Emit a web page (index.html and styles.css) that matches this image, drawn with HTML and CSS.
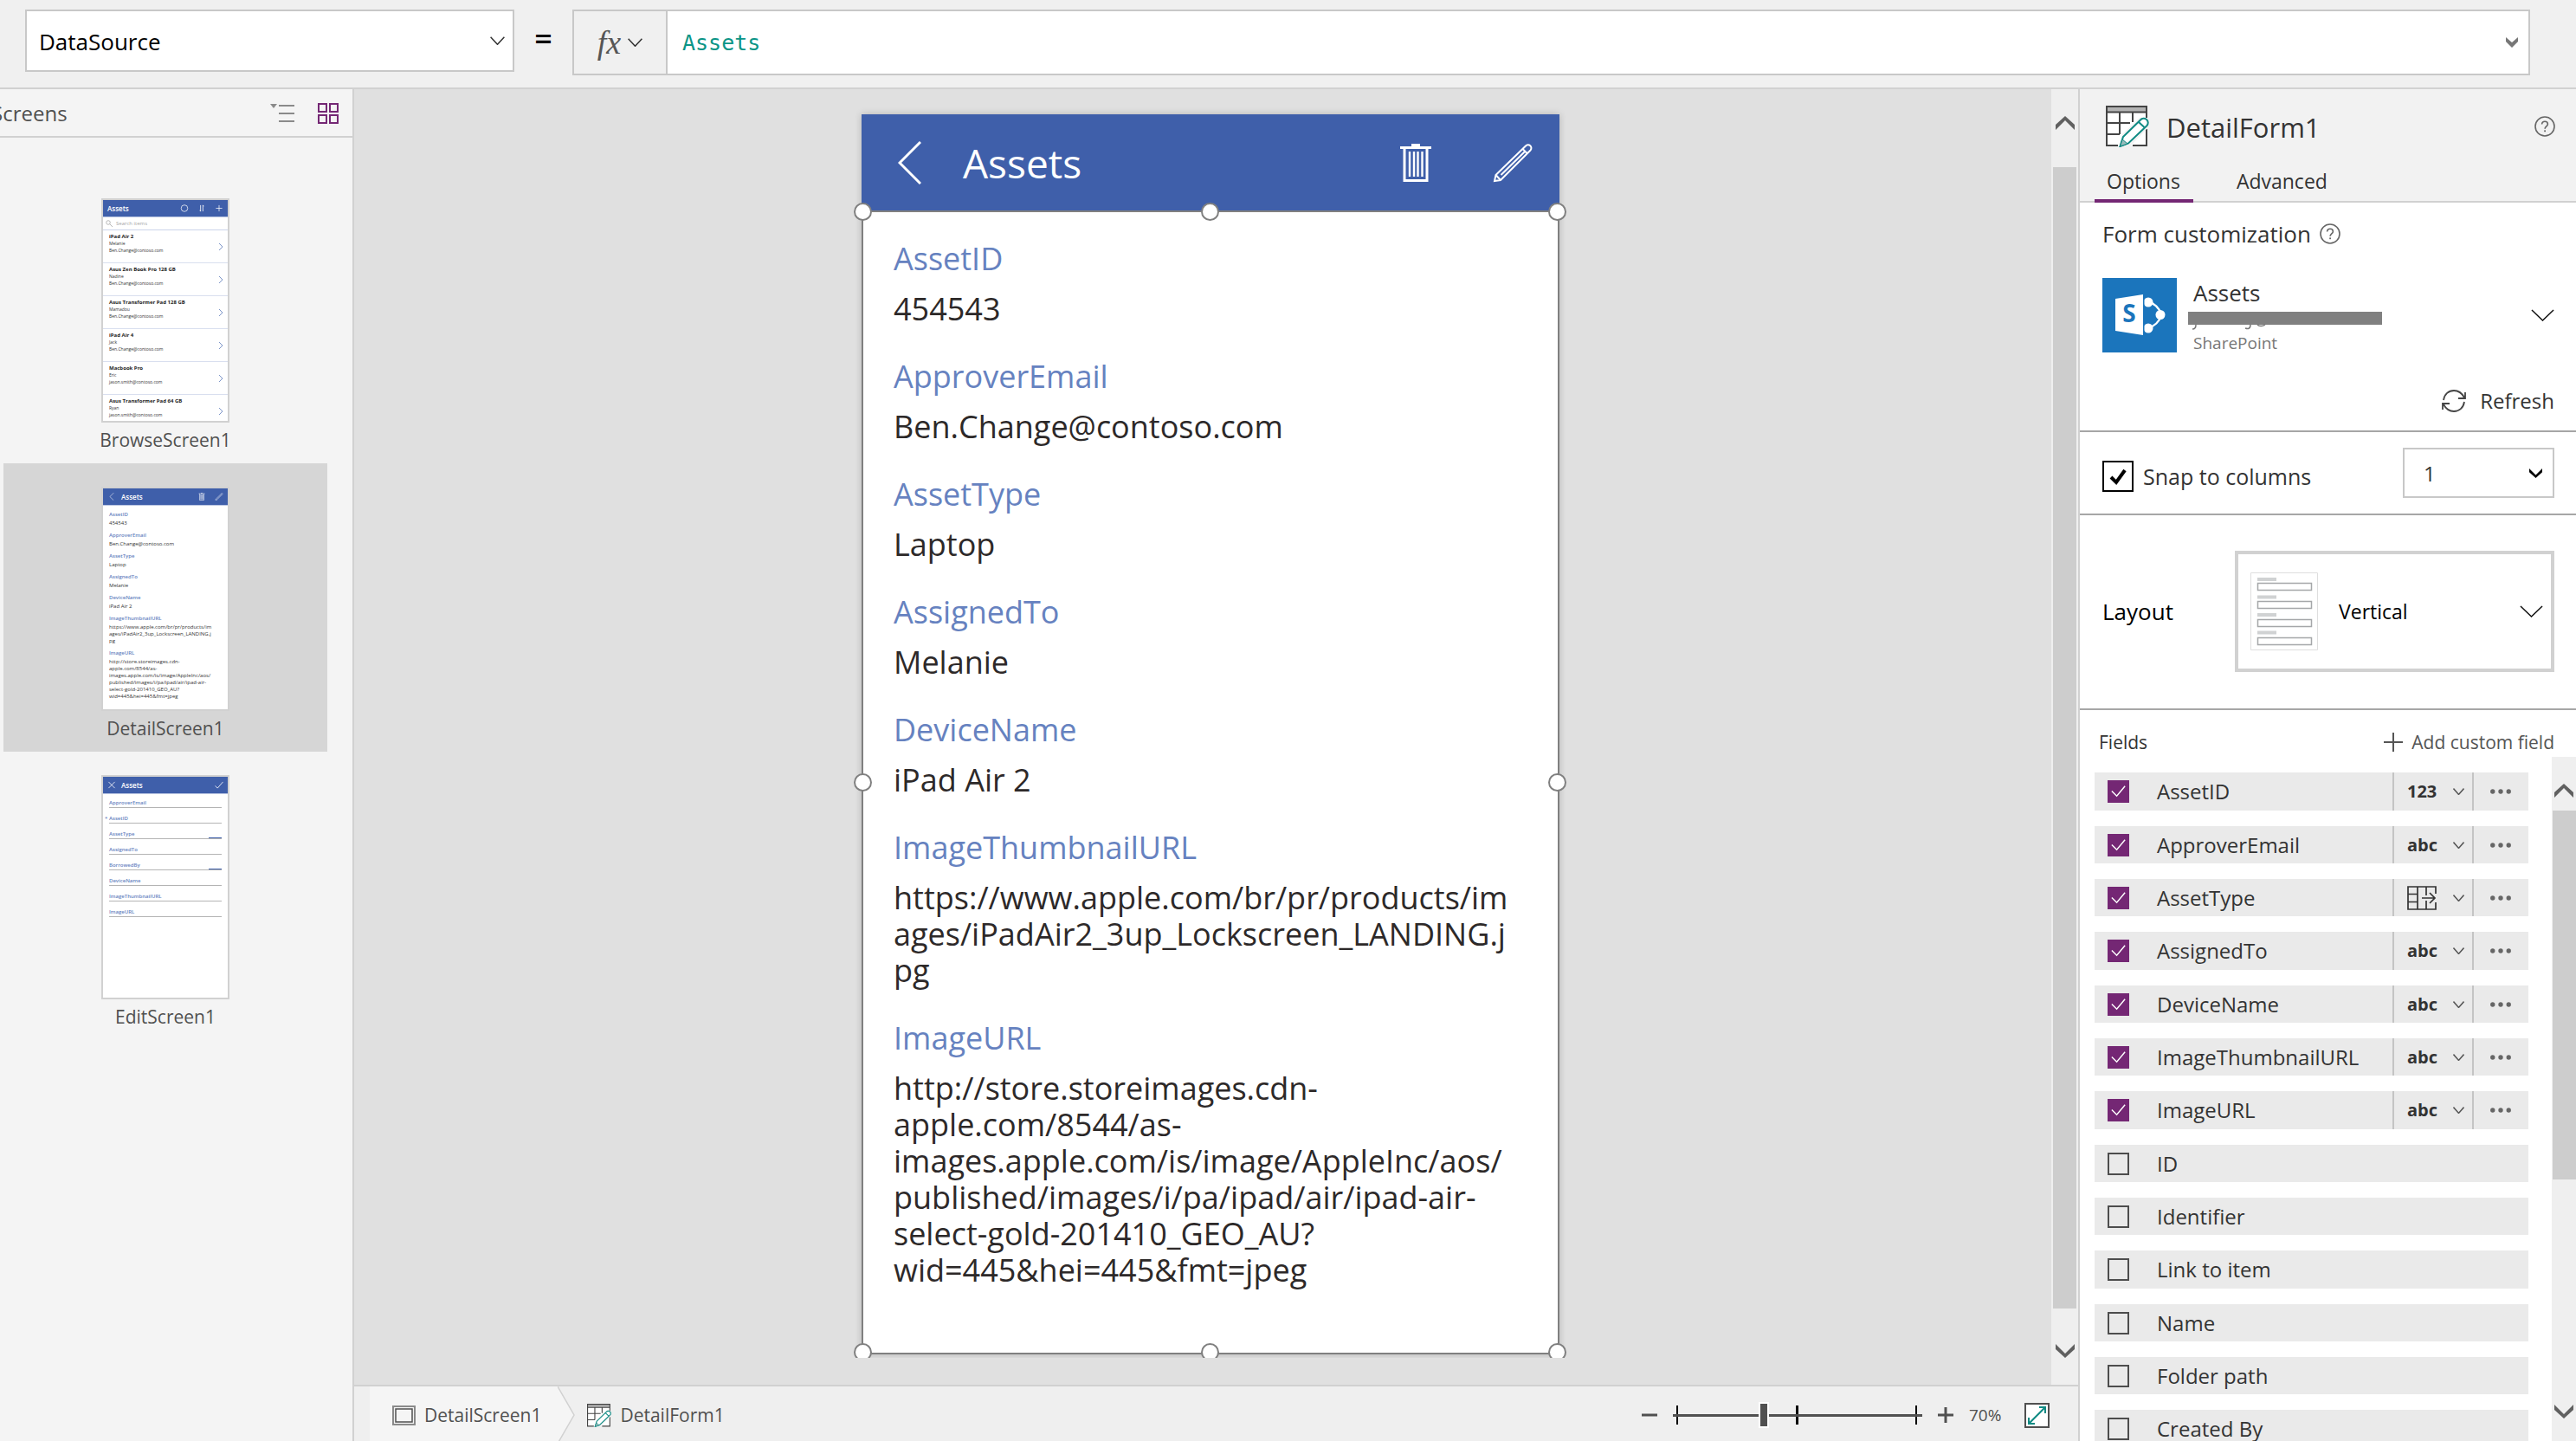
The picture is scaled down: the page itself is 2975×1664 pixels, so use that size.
FILE: index.html
```html
<!DOCTYPE html>
<html lang="en">
<head>
<meta charset="utf-8">
<title>DetailForm1 - Assets</title>
<meta name="viewport" content="width=device-width, initial-scale=1">
<link rel="stylesheet" href="styles.css">
</head>
<body>
<svg class="sprite" aria-hidden="true">
  <symbol id="thin-down" viewBox="0 0 28 14" preserveAspectRatio="none"><path d="M1 1l13 12L27 1" fill="none" stroke="currentColor" stroke-width="1.500" vector-effect="non-scaling-stroke"/></symbol>
  <symbol id="bold-down" viewBox="0 0 22 16"><path d="M0 0l11 11L22 0v6L11 16 0 6z" fill="currentColor"/></symbol>
  <symbol id="bold-up" viewBox="0 0 22 16"><path d="M0 16L11 5l11 11v-6L11 0 0 10z" fill="currentColor"/></symbol>
  <symbol id="help" viewBox="0 0 24 24"><circle cx="12" cy="12" r="11" fill="none" stroke="currentColor" stroke-width="1.6"/><path d="M8.6 9.6c0-2.2 1.4-3.4 3.4-3.4s3.4 1.2 3.4 3c0 2.6-3.3 2.9-3.3 5.6" fill="none" stroke="currentColor" stroke-width="1.6"/><rect x="11.2" y="16.4" width="1.8" height="1.8" fill="currentColor"/></symbol>
  <symbol id="form" viewBox="0 0 50 48">
    <path d="M1 1h46v45H1z" fill="#fff"/>
    <path d="M1 1h46v6H1z" fill="#b3b3b3"/>
    <path d="M31 46h16V27M47 14V1H1v45h13M1 7.500h46M1 20h27M1 33h15M16 8v25M31 8v11" fill="none" stroke="#444" stroke-width="2"/>
    <path d="M15 48l4-15 20-19 9 1 2 9-21 22z" fill="#f2f2f2"/>
    <path d="M16.500 47l3.500-11 20-19.500a4.500 4.500 0 0 1 7.500 6.500L26 43.500z" fill="#fff" stroke="#0f8a83" stroke-width="2"/>
    <path d="M16.500 47l2.600-8 6 5z" fill="#9bb" stroke="#0f8a83" stroke-width="1"/>
    <path d="M38 19l6.500 6" stroke="#0f8a83" stroke-width="2"/>
  </symbol>
  <symbol id="dots" viewBox="0 0 26 6"><circle cx="3" cy="3" r="2.900" fill="currentColor"/><circle cx="13" cy="3" r="2.900" fill="currentColor"/><circle cx="23" cy="3" r="2.900" fill="currentColor"/></symbol>
  <symbol id="trash" viewBox="0 0 36 46"><path d="M0 4h36v3H0zM13 1h10v3H13z" fill="currentColor"/><path d="M5 6v37.500h26V6" fill="none" stroke="currentColor" stroke-width="3"/><path d="M11 10v29M16 10v29M20.500 10v29M25.500 10v29" fill="none" stroke="currentColor" stroke-width="2.400"/></symbol>
  <symbol id="pencil" viewBox="0 0 46 46"><path d="M2 44l1.500-7L38 3.500a3.500 3.500 0 0 1 5.500 5L9 43zM34.500 7l5.500 5.500M3.500 37l5.500 6M9.500 37L36.500 10.500" fill="none" stroke="currentColor" stroke-width="2"/></symbol>
  <symbol id="back" viewBox="0 0 27 50"><path d="M26 1L2 25l24 24" fill="none" stroke="currentColor" stroke-width="3"/></symbol>
  <symbol id="cell-go" viewBox="0 0 6 10"><path d="M1 1l4 4-4 4" fill="none" stroke="#7f97c9" stroke-width="1"/></symbol>
</svg>

<div class="app">
  <header class="formula-bar">
    <div class="pick property">
      <select aria-label="Property"><option>DataSource</option></select>
      <svg class="chev"><use href="#thin-down"/></svg>
    </div>
    <span class="equals">=</span>
    <div class="formula">
      <button class="fx" type="button" aria-label="Functions"><i>fx</i><svg class="chev"><use href="#thin-down"/></svg></button>
      <input type="text" value="Assets" aria-label="Formula">
      <button class="expand" type="button" aria-label="Expand formula bar"><svg viewBox="0 0 14 12"><path d="M0 0l7 6 7-6v5l-7 7-7-7z" fill="currentColor"/></svg></button>
    </div>
  </header>

  <div class="workspace">
    <aside class="screens">
      <div class="screens-head">
        <h2>Screens</h2>
        <button type="button" aria-label="Tree view"><svg class="tree" viewBox="0 0 28 22"><path d="M0 0h8L4 5z" fill="#8a8a8a"/><path d="M10 2h18M10 11h18M10 20h18" stroke="#8a8a8a" stroke-width="2"/></svg></button>
        <button type="button" aria-label="Thumbnail view"><svg class="tiles" viewBox="0 0 24 24"><path d="M1 1h9v9H1zM14 1h9v9h-9zM1 14h9v9H1zM14 14h9v9h-9z" fill="none" stroke="#742774" stroke-width="2"/></svg></button>
      </div>
      <ul class="screen-list">
        <li>
          <div class="thumb">
            <div class="t-bar"><b>Assets</b>
              <svg viewBox="0 0 10 10"><circle cx="5" cy="5" r="4.200" fill="none" stroke="#fff" stroke-width=".8"/></svg>
              <svg viewBox="0 0 10 10"><path d="M3.500 1v8M2.500 7.500l1 1.500M6.500 9V1l1 1.500" fill="none" stroke="#fff" stroke-width=".9"/></svg>
              <svg viewBox="0 0 10 10"><path d="M5 1v8M1 5h8" stroke="#fff" stroke-width=".8"/></svg>
            </div>
            <div class="t-search"><svg viewBox="0 0 8 8"><circle cx="3" cy="3" r="2.300" fill="none" stroke="#aaa" stroke-width=".8"/><path d="M4.700 4.700L8 8" stroke="#aaa" stroke-width=".8"/></svg>Search items</div>
            <div class="t-row"><p><b>iPad Air 2</b><br>Melanie<br>Ben.Change@contoso.com</p><svg><use href="#cell-go"/></svg></div>
            <div class="t-row"><p><b>Asus Zen Book Pro 128 GB</b><br>Nadine<br>Ben.Change@contoso.com</p><svg><use href="#cell-go"/></svg></div>
            <div class="t-row"><p><b>Asus Transformer Pad 128 GB</b><br>Mamadou<br>Ben.Change@contoso.com</p><svg><use href="#cell-go"/></svg></div>
            <div class="t-row"><p><b>iPad Air 4</b><br>Jack<br>Ben.Change@contoso.com</p><svg><use href="#cell-go"/></svg></div>
            <div class="t-row"><p><b>Macbook Pro</b><br>Eric<br>jason.smith@contoso.com</p><svg><use href="#cell-go"/></svg></div>
            <div class="t-row"><p><b>Asus Transformer Pad 64 GB</b><br>Ryan<br>jason.smith@contoso.com</p><svg><use href="#cell-go"/></svg></div>
          </div>
          <span>BrowseScreen1</span>
        </li>
        <li class="current">
          <div class="thumb">
            <div class="t-bar sub"><svg><use href="#back"/></svg><b>Assets</b><svg><use href="#trash"/></svg><svg><use href="#pencil"/></svg></div>
            <dl class="t-detail">
              <dt>AssetID</dt><dd>454543</dd>
              <dt>ApproverEmail</dt><dd>Ben.Change@contoso.com</dd>
              <dt>AssetType</dt><dd>Laptop</dd>
              <dt>AssignedTo</dt><dd>Melanie</dd>
              <dt>DeviceName</dt><dd>iPad Air 2</dd>
              <dt>ImageThumbnailURL</dt><dd>https://www.apple.com/br/pr/products/im<br>ages/iPadAir2_3up_Lockscreen_LANDING.j<br>pg</dd>
              <dt>ImageURL</dt><dd>http://store.storeimages.cdn-<br>apple.com/8544/as-<br>images.apple.com/is/image/AppleInc/aos/<br>published/images/i/pa/ipad/air/ipad-air-<br>select-gold-201410_GEO_AU?<br>wid=445&amp;hei=445&amp;fmt=jpeg</dd>
            </dl>
          </div>
          <span>DetailScreen1</span>
        </li>
        <li>
          <div class="thumb">
            <div class="t-bar sub"><svg viewBox="0 0 10 10"><path d="M1 1l8 8M9 1L1 9" stroke="#fff" stroke-width=".9"/></svg><b>Assets</b><svg viewBox="0 0 10 10"><path d="M0 6l3 3 7-8" fill="none" stroke="#fff" stroke-width=".9"/></svg></div>
            <div class="t-edit">
              <p>ApproverEmail</p><p class="required">AssetID</p><p class="lookup">AssetType</p><p>AssignedTo</p><p class="lookup">BorrowedBy</p><p>DeviceName</p><p>ImageThumbnailURL</p><p>ImageURL</p>
            </div>
          </div>
          <span>EditScreen1</span>
        </li>
      </ul>
    </aside>

    <main class="center">
      <div class="stage">
        <div class="viewport">
          <div class="phone">
            <div class="phone-bar">
              <svg class="i-back"><use href="#back"/></svg>
              <h1>Assets</h1>
              <svg class="i-trash"><use href="#trash"/></svg>
              <svg class="i-pencil"><use href="#pencil"/></svg>
            </div>
            <dl class="detail">
              <div><dt>AssetID</dt><dd>454543</dd></div>
              <div><dt>ApproverEmail</dt><dd>Ben.Change@contoso.com</dd></div>
              <div><dt>AssetType</dt><dd>Laptop</dd></div>
              <div><dt>AssignedTo</dt><dd>Melanie</dd></div>
              <div><dt>DeviceName</dt><dd>iPad Air 2</dd></div>
              <div><dt>ImageThumbnailURL</dt><dd>https://www.apple.com/br/pr/products/im<br>ages/iPadAir2_3up_Lockscreen_LANDING.j<br>pg</dd></div>
              <div><dt>ImageURL</dt><dd>http://store.storeimages.cdn-<br>apple.com/8544/as-<br>images.apple.com/is/image/AppleInc/aos/<br>published/images/i/pa/ipad/air/ipad-air-<br>select-gold-201410_GEO_AU?<br>wid=445&amp;hei=445&amp;fmt=jpeg</dd></div>
              <i class="handle nw"></i><i class="handle n"></i><i class="handle ne"></i>
              <i class="handle w"></i><i class="handle e"></i>
              <i class="handle sw"></i><i class="handle s"></i><i class="handle se"></i>
            </dl>
          </div>
        </div>
        <div class="scrollbar stage-scroll"><svg><use href="#bold-up"/></svg><i></i><svg><use href="#bold-down"/></svg></div>
      </div>
      <footer class="status">
        <a class="crumb first" href="#screen">
          <svg class="crumb-screen" viewBox="0 0 27 23"><path d="M1 1h25v21H1z" fill="none" stroke="#8a8a8a" stroke-width="2"/><path d="M4 4h19v15H4z" fill="none" stroke="#505050" stroke-width="1.500"/></svg>DetailScreen1
        </a>
        <svg class="crumb-edge" viewBox="0 0 20 66"><path d="M0 0l19 33L0 66z" fill="#f5f5f5"/><path d="M0 0l19 33L0 66" fill="none" stroke="#d1d1d1" stroke-width="1.500"/></svg>
        <a class="crumb" href="#form-control"><svg class="crumb-form"><use href="#form"/></svg>DetailForm1</a>
        <div class="zoom">
          <button type="button" aria-label="Zoom out"><svg viewBox="0 0 18 18"><path d="M0 9h18" stroke="#505050" stroke-width="3"/></svg></button>
          <input type="range" min="0" max="100" value="36" aria-label="Zoom">
          <button type="button" aria-label="Zoom in"><svg viewBox="0 0 18 18"><path d="M0 9h18M9 0v18" stroke="#505050" stroke-width="3"/></svg></button>
          <output>70%</output>
          <button type="button" aria-label="Fit to window"><svg class="fit" viewBox="0 0 29 29"><path d="M1 1h27v27H1z" fill="#fff" stroke="#505050" stroke-width="2"/><path d="M5 24L24 5M17 5h7v7M5 17v7h7" fill="none" stroke="#0f8a83" stroke-width="2"/></svg></button>
        </div>
      </footer>
    </main>

    <aside class="props">
      <div class="props-head">
        <svg class="form-icon"><use href="#form"/></svg>
        <h2>DetailForm1</h2>
        <button type="button" aria-label="Help"><svg class="help"><use href="#help"/></svg></button>
      </div>
      <nav class="tabs"><button class="on" type="button">Options</button><button type="button">Advanced</button></nav>

      <section class="custom">
        <h3>Form customization <svg class="help"><use href="#help"/></svg></h3>
        <button class="source" type="button">
          <svg class="sp" viewBox="0 0 86 86"><rect width="86" height="86" fill="#1b75bc"/><path d="M15 24l32-5v47l-32-5z" fill="#fff"/><path d="M52 27c8 2 14 8 16 15M52 58c8-2 14-8 16-15" fill="none" stroke="#fff" stroke-width="2.500"/><circle cx="53" cy="28" r="5.500" fill="#fff"/><circle cx="53" cy="58" r="5.500" fill="#fff"/><circle cx="67" cy="42.500" r="5.500" fill="#fff"/><path d="M47 19h1.500v47H47z" fill="#1b75bc"/><text x="31" y="51" text-anchor="middle" class="sp-s">S</text></svg>
          <span class="source-text"><b>Assets</b><svg class="redacted" viewBox="0 0 224 22"><path d="M0 0h224v15H0z" fill="#808080"/><path d="M9 15c0 3-1 5-4 5M72 15c0 5-3 5-6 4M80 15c2 2 6 2 9 0" fill="none" stroke="#777" stroke-width="1.500"/></svg><small>SharePoint</small></span>
          <svg class="chev big"><use href="#thin-down"/></svg>
        </button>
        <button class="refresh" type="button"><svg viewBox="0 0 28 26"><path d="M2 12C3 5 8 1 14 1c5 0 9 2.500 12 8M26 14c-1 7-6 11-12 11-5 0-9-2.500-12-8M27 3v7h-8M1 23v-7h8" fill="none" stroke="#444" stroke-width="1.800"/></svg>Refresh</button>
      </section>

      <section class="snap">
        <input type="checkbox" id="snap" checked><label for="snap">Snap to columns</label>
        <div class="pick columns"><select aria-label="Columns"><option>1</option></select><svg><use href="#bold-down"/></svg></div>
      </section>

      <section class="layout">
        <span id="layout-label">Layout</span>
        <button type="button" aria-labelledby="layout-label layout-value">
          <svg class="layout-icon" viewBox="0 0 78 90"><path d="M.5.5h77v89H.5z" fill="#fff" stroke="#dedede"/><path d="M8 8h22M8 28.500h22M8 49h22M8 69.500h22" stroke="#d0d2d3" stroke-width="4"/><path d="M8.500 12.500h62v8h-62zM8.500 33.500h62v8h-62zM8.500 54.500h62v8h-62zM8.500 75.500h62v8h-62z" fill="#fff" stroke="#a5a7a9" stroke-width="1.500"/></svg>
          <span id="layout-value">Vertical</span>
          <svg class="chev big"><use href="#thin-down"/></svg>
        </button>
      </section>

      <section class="fields">
        <div class="fields-main">
          <div class="fields-head"><h3>Fields</h3><button type="button"><svg viewBox="0 0 22 22"><path d="M0 11h22M11 0v22" stroke="#555" stroke-width="2"/></svg>Add custom field</button></div>
          <ul>
            <li><label><input type="checkbox" checked>AssetID</label><button class="type" type="button"><b>123</b><svg><use href="#thin-down"/></svg></button><button class="more" type="button" aria-label="More"><svg><use href="#dots"/></svg></button></li>
            <li><label><input type="checkbox" checked>ApproverEmail</label><button class="type" type="button"><b>abc</b><svg><use href="#thin-down"/></svg></button><button class="more" type="button" aria-label="More"><svg><use href="#dots"/></svg></button></li>
            <li><label><input type="checkbox" checked>AssetType</label><button class="type" type="button" aria-label="Lookup"><svg class="lookup-icon" viewBox="0 0 34 28"><path d="M33 9V1H1v26h32v-8M12 1v26M1 9.500h11M1 18.500h11M22 1v10M22 17v10M17 14h15M26 8l6 6-6 6" fill="none" stroke="#333" stroke-width="1.700"/></svg><svg><use href="#thin-down"/></svg></button><button class="more" type="button" aria-label="More"><svg><use href="#dots"/></svg></button></li>
            <li><label><input type="checkbox" checked>AssignedTo</label><button class="type" type="button"><b>abc</b><svg><use href="#thin-down"/></svg></button><button class="more" type="button" aria-label="More"><svg><use href="#dots"/></svg></button></li>
            <li><label><input type="checkbox" checked>DeviceName</label><button class="type" type="button"><b>abc</b><svg><use href="#thin-down"/></svg></button><button class="more" type="button" aria-label="More"><svg><use href="#dots"/></svg></button></li>
            <li><label><input type="checkbox" checked>ImageThumbnailURL</label><button class="type" type="button"><b>abc</b><svg><use href="#thin-down"/></svg></button><button class="more" type="button" aria-label="More"><svg><use href="#dots"/></svg></button></li>
            <li><label><input type="checkbox" checked>ImageURL</label><button class="type" type="button"><b>abc</b><svg><use href="#thin-down"/></svg></button><button class="more" type="button" aria-label="More"><svg><use href="#dots"/></svg></button></li>
            <li><label><input type="checkbox">ID</label></li>
            <li><label><input type="checkbox">Identifier</label></li>
            <li><label><input type="checkbox">Link to item</label></li>
            <li><label><input type="checkbox">Name</label></li>
            <li><label><input type="checkbox">Folder path</label></li>
            <li><label><input type="checkbox">Created By</label></li>
          </ul>
        </div>
        <div class="scrollbar fields-scroll"><svg><use href="#bold-up"/></svg><i></i><svg><use href="#bold-down"/></svg></div>
      </section>
    </aside>
  </div>
</div>
</body>
</html>
```
FILE: styles.css
```css
:root {
  --line: #d1d1d1;
  --purple: #742774;
  --blue: #3f5faa;
  --label: #6682c0;
}

* { box-sizing: border-box; }

body {
  margin: 0;
  font: 24px/32px "Open Sans", "Noto Sans", sans-serif;
  color: #333;
}

h1, h2, h3, p, ul, dl, dd { margin: 0; padding: 0; font-weight: 400; }
ul { list-style: none; }
svg { display: block; flex: none; }
a { color: inherit; text-decoration: none; }
button, input, select { font: inherit; color: inherit; border: 0; padding: 0; margin: 0; background: none; border-radius: 0; }
.sprite { position: absolute; width: 0; height: 0; }

.app { height: 100vh; display: flex; flex-direction: column; overflow: hidden; }

/* Formula bar */
.formula-bar {
  flex: none;
  display: flex;
  align-items: flex-start;
  padding: 11px 53px 14px 29px;
  background: #f0f0f0;
  border-bottom: 2px solid var(--line);
  font-size: 26px;
}
.pick { display: grid; align-items: center; background: #fff; border: 2px solid #c8c8c8; }
.pick select { grid-area: 1 / 1; width: 100%; height: 100%; appearance: none; }
.pick svg { grid-area: 1 / 1; justify-self: end; pointer-events: none; }
.property { width: 565px; height: 72px; color: #000; }
.property select { padding: 2px 14px 0; }
.property .chev { margin-right: 9px; }
.chev { width: 17px; height: 10px; color: #333; }
.chev.big { width: 27px; height: 14px; color: #111; }
.equals { width: 67px; line-height: 68px; font-size: 36px; font-weight: 600; text-align: center; color: #000; }
.formula { flex: 1; display: flex; height: 76px; background: #fff; border: 2px solid #c8c8c8; }
.fx { width: 108px; display: flex; align-items: center; justify-content: center; gap: 8px; background: #f0f0f0; border-right: 2px solid #c8c8c8; }
.fx i { font: italic 38px/60px "Liberation Serif", serif; color: #555; }
.formula input { flex: 1; min-width: 0; padding: 0 17px; font: 25px "DejaVu Sans Mono", monospace; color: #0b9587; outline: 0; }
.expand { padding: 0 12px; color: #777; }
.expand svg { width: 14px; height: 12px; }

.workspace { flex: 1; min-height: 0; display: flex; }

/* Screens list */
.screens { flex: none; width: 409px; background: #f4f4f4; border-right: 2px solid var(--line); overflow: hidden; }
.screens-head { display: flex; align-items: center; height: 56px; padding: 2px 16px 0 0; border-bottom: 2px solid var(--line); color: #505050; }
.screens-head h2 { flex: 1; margin-left: -10px; font-size: 24px; }
.tree { width: 28px; height: 22px; margin-right: 27px; }
.tiles { width: 24px; height: 24px; }
.screen-list { padding: 43px 29px 0 4px; }
.screen-list li { height: 333px; padding-top: 27px; display: flex; flex-direction: column; align-items: center; gap: 4px; font-size: 21px; color: #505050; }
.screen-list .current { background: #d6d6d6; }

.thumb { width: 148px; height: 259px; overflow: hidden; background: #fff; border: 2px solid var(--line); font-size: 6px; line-height: 8px; color: #333; }
.t-bar { display: flex; align-items: center; gap: 10px; height: 20px; padding: 0 5px; background: var(--blue); border-bottom: 1px solid #b9c5e2; color: #fff; }
.t-bar b { flex: 1; font-size: 8px; font-weight: 600; }
.t-bar svg { width: 10px; height: 9px; }
.t-bar.sub b { margin-left: -4px; }
.t-search { display: flex; align-items: center; gap: 4px; height: 15px; padding-left: 3px; border-bottom: 1px solid #ccd5ea; color: #a6a6a6; }
.t-search svg { width: 8px; height: 8px; }
.t-row { display: flex; align-items: center; justify-content: space-between; height: 38px; padding: 0 5px 0 7px; border-bottom: 1px solid #d9dfef; font-size: 5px; }
.t-row p { align-self: flex-start; padding-top: 3px; }
.t-row b { font-size: 6px; font-weight: 700; color: #222; }
.t-row svg { width: 6px; height: 10px; }
.t-detail { padding: 5px 7px; white-space: nowrap; }
.t-detail dt { line-height: 10px; color: var(--label); font-weight: 600; }
.t-detail dd { padding: 1px 0; margin-bottom: 4px; }
.t-edit { padding: 0 7px; margin-top: -2px; }
.t-edit p { height: 18px; padding-top: 9px; border-bottom: 1px solid #b4b4b4; line-height: 6px; font-weight: 600; color: var(--label); }
.t-edit .required::before { content: "*"; float: left; width: 5px; margin-left: -5px; }
.t-edit .lookup { background: linear-gradient(var(--blue), var(--blue)) right bottom / 15px 1px no-repeat; }

/* Canvas */
.center { flex: 1; min-width: 0; display: flex; flex-direction: column; }
.stage { flex: 1; min-height: 0; display: flex; background: #e0e0e0; }
.viewport { flex: 1; align-self: flex-start; display: flex; justify-content: center; overflow: hidden; padding: 29px 0 4px 18px; }
.phone { width: 806px; background: #fff; box-shadow: 0 0 8px rgba(0, 0, 0, .2); }
.phone-bar { display: flex; align-items: center; height: 111px; padding: 0 31px 0 42px; background: var(--blue); color: #fff; }
.phone-bar h1 { flex: 1; margin-left: 48px; font-size: 46px; line-height: 64px; }
.i-back { width: 27px; height: 50px; }
.i-trash { width: 36px; height: 46px; margin-right: 71px; }
.i-pencil { width: 46px; height: 46px; }
.detail { position: relative; display: flex; flex-direction: column; gap: 36px; padding: 33px 36px 74px 35px; border: 2px solid #808080; font-size: 36px; line-height: 42px; color: #2d2929; }
.detail dt { margin-bottom: 16px; color: var(--label); }
.handle { position: absolute; width: 21px; height: 21px; margin: -11px; border: 2px solid #808080; border-radius: 50%; background: #fff; }
.nw, .w, .sw { left: 0; }
.n, .s { left: 50%; }
.ne, .e, .se { left: 100%; }
.nw, .n, .ne { top: 0; }
.w, .e { top: 50%; }
.sw, .s, .se { top: 100%; }

.scrollbar { flex: none; display: flex; flex-direction: column; align-items: center; background: #efefef; color: #606060; }
.scrollbar svg { width: 22px; height: 16px; }
.scrollbar i { width: 27px; background: #cdcdcd; }
.stage-scroll { width: 31px; padding: 31px 0; }
.stage-scroll i { flex: 1; margin: 43px 0 41px; }

/* Status bar */
.status { flex: none; display: flex; align-items: center; height: 65px; overflow: hidden; border-top: 2px solid var(--line); background: #efefef; font-size: 21px; color: #505050; }
.status > * { padding-top: 3px; }
.crumb { display: flex; align-items: center; gap: 10px; height: 63px; }
.crumb.first { margin-left: 18px; padding: 3px 19px 0 26px; background: #f5f5f5; }
.status .crumb-edge { align-self: flex-start; width: 20px; height: 66px; margin-right: 14px; padding: 0; }
.crumb-screen { width: 27px; height: 23px; }
.crumb-form { width: 28px; height: 27px; }
.zoom { flex: 1; display: flex; align-items: center; justify-content: flex-end; padding-right: 33px; }
.zoom svg { width: 18px; height: 18px; }
.zoom .fit { width: 29px; height: 29px; }
.zoom output { width: 64px; margin-left: 18px; font-size: 19px; }
.zoom input {
  appearance: none;
  width: 288px;
  height: 28px;
  margin: 0 18px;
  background:
    linear-gradient(#505050, #505050) center / 100% 3px no-repeat,
    linear-gradient(#000, #000) 4px center / 2px 22px no-repeat,
    linear-gradient(#000, #000) 142px center / 3px 22px no-repeat,
    linear-gradient(#000, #000) 280px center / 2px 22px no-repeat;
}
.zoom input::-webkit-slider-thumb { appearance: none; width: 12px; height: 30px; background: #505050; border: 2px solid #fff; }

/* Properties pane */
.props { flex: none; width: 575px; display: flex; flex-direction: column; background: #fff; border-left: 2px solid var(--line); }
.props-head { display: flex; align-items: center; height: 86px; padding: 0 24px 0 30px; background: #f2f2f2; }
.props-head h2 { flex: 1; margin-left: 20px; padding-top: 2px; font-size: 31px; line-height: 40px; }
.form-icon { width: 50px; height: 48px; }
.help { width: 24px; height: 24px; color: #666; }
.tabs { display: flex; gap: 36px; height: 45px; padding-left: 17px; background: #f2f2f2; border-bottom: 2px solid var(--line); font-size: 23px; }
.tabs button { height: 45px; padding: 0 15px 2px 14px; border-bottom: 4px solid transparent; }
.tabs .on { border-color: var(--purple); }
.props section { flex: none; border-bottom: 2px solid #a6a6a6; }
.custom { display: flex; flex-direction: column; height: 265px; padding: 20px 25px 0 26px; }
.custom h3 { display: flex; align-items: center; gap: 10px; font-size: 26px; }
.source { display: flex; align-items: center; gap: 13px; height: 86px; margin-top: 35px; text-align: left; }
.sp { width: 86px; height: 86px; }
.sp-s { font: 700 28px "Open Sans", sans-serif; fill: #1b75bc; }
.source-text { flex: 1; display: flex; flex-direction: column; }
.source-text b { padding-left: 6px; font-size: 26px; font-weight: 400; line-height: 36px; }
.source-text small { padding-left: 6px; font-size: 19px; line-height: 26px; color: #777; }
.redacted { width: 224px; height: 22px; margin: 4px 0 1px; }
.refresh { align-self: flex-end; display: flex; align-items: center; gap: 16px; margin-top: 40px; }
.refresh svg { width: 28px; height: 26px; }
.snap { display: flex; align-items: center; height: 96px; padding: 0 25px 0 26px; }
.snap label { flex: 1; margin-left: 11px; padding-top: 8px; font-size: 25px; }
.snap input { appearance: none; width: 36px; height: 36px; margin-top: 8px; border: 2px solid #000; background: #fff; }
.snap input:checked { background-image: url("data:image/svg+xml,%3Csvg xmlns='http://www.w3.org/2000/svg' viewBox='0 0 32 32'%3E%3Cpath d='M8 17l6 6L24 9' fill='none' stroke='%23000' stroke-width='4'/%3E%3C/svg%3E"); }
.columns { width: 175px; height: 58px; }
.columns select { padding: 2px 22px 0; }
.columns svg { width: 15px; height: 11px; margin-right: 12px; color: #000; }
.layout { display: flex; align-items: center; justify-content: space-between; height: 225px; padding: 0 25px 2px 26px; font-size: 26px; color: #000; }
.layout button { display: flex; align-items: center; width: 369px; height: 140px; padding: 0 9px 0 14px; border: 4px solid var(--line); font-size: 23px; text-align: left; }
.layout-icon { width: 78px; height: 90px; }
.layout button span { flex: 1; margin-left: 24px; }
.props .fields { flex: 1; min-height: 0; display: flex; border: 0; overflow: hidden; }
.fields-main { flex: 1; padding: 0 27px 0 17px; }
.fields-head { display: flex; align-items: center; justify-content: space-between; height: 72px; padding: 2px 0 0 5px; margin-right: -30px; font-size: 21px; }
.fields-head h3 { font-size: 21px; }
.fields-head button { display: flex; align-items: center; gap: 10px; color: #555; }
.fields-head svg { width: 22px; height: 22px; }
.fields ul { display: grid; gap: 18px; }
.fields li { display: flex; height: 43px; background: #eaeaea; }
.fields li:nth-child(3n + 1) { height: 44px; }
.fields label { flex: 1; display: flex; align-items: center; gap: 32px; padding-left: 15px; }
.fields input { appearance: none; width: 25px; height: 26px; border: 2px solid #4d4d4d; }
.fields input:checked { border-color: var(--purple); background: var(--purple) url("data:image/svg+xml,%3Csvg xmlns='http://www.w3.org/2000/svg' viewBox='0 0 22 22'%3E%3Cpath d='M3 11l6 6L19 5' fill='none' stroke='%23fff' stroke-width='1.500'/%3E%3C/svg%3E"); }
.type { display: flex; align-items: center; justify-content: space-between; width: 92px; padding: 0 9px 0 15px; border-left: 2px solid #c4c4c4; color: #555; }
.type b { font-size: 20px; font-weight: 700; color: #333; }
.type svg { width: 13px; height: 8px; }
.type .lookup-icon { width: 34px; height: 28px; }
.more { width: 65px; padding-left: 19px; border-left: 2px solid #c4c4c4; color: #666; }
.more svg { width: 24px; height: 6px; }
.fields-scroll { width: 28px; margin: 54px 0 0; padding: 31px 0 26px; }
.fields-scroll i { flex: none; height: 426px; margin: 15px 0 auto; }
```
